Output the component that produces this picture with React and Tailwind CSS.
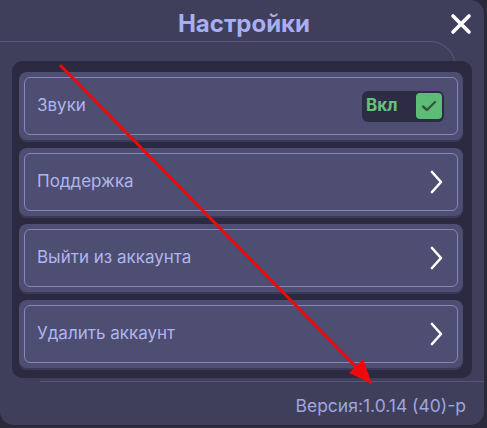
import React from "react";

function Chevron() {
  return (
    <svg width="14" height="24" viewBox="0 0 14 24" fill="none">
      <path d="M3 2 L12 12 L3 22" stroke="#ffffff" strokeWidth="2.6" strokeLinecap="round" strokeLinejoin="round" />
    </svg>
  );
}

function Row({ label, right }) {
  return (
    <div className="h-[68px] rounded-[8px] bg-[#4e4d72] p-[5px] shadow-[0_2px_0_#3a3957]">
      <div className="h-full rounded-[6px] border border-[#8584bb] flex items-center justify-between pl-[12px] pr-[14px]">
        <span className="text-[17px] text-[#b0b5ec]">{label}</span>
        {right}
      </div>
    </div>
  );
}

function Toggle() {
  return (
    <div className="-mr-[1px] w-[82px] h-[31px] rounded-[6px] bg-[#2d2c44] flex items-center justify-between pl-[4px] pr-[2px]">
      <span className="text-[17px] font-bold text-[#67c27b]">Вкл</span>
      <div className="w-[26px] h-[26px] rounded-[4px] bg-[#5dbd76] flex items-center justify-center">
        <svg width="16" height="12" viewBox="0 0 16 12" fill="none">
          <path d="M2 6.5 L6 10 L14 2" stroke="#35573f" strokeWidth="2.4" strokeLinecap="round" strokeLinejoin="round" />
        </svg>
      </div>
    </div>
  );
}

export default function App() {
  return (
    <div className="w-[487px] h-[428px] bg-[#2a2a3b]" style={{ fontFamily: "Inter, 'Noto Sans', sans-serif" }}>
      <div className="relative w-[484px] h-[425px] bg-[#403f5b] rounded-[14px] rounded-tl-none overflow-hidden flex flex-col">
        <div className="h-[41px] flex items-center justify-center relative shrink-0">
          <span className="text-[24px] font-bold text-[#a8aef2] leading-none mt-[7px] ml-[4px]">Настройки</span>
          <div className="absolute right-[12px] top-[13px]">
            <svg width="22" height="22" viewBox="0 0 22 22" fill="none">
              <path d="M3 3 L19 19 M19 3 L3 19" stroke="#ffffff" strokeWidth="3.6" strokeLinecap="round" />
            </svg>
          </div>
        </div>
        <div className="border-t border-r border-[#57567d] rounded-tr-[26px] mr-[28px] pt-[19px] h-[38px] shrink-0" />
        <div className="-mt-[18px] ml-[12px] mr-[12px] h-[317px] rounded-[10px] bg-[#2b2a41] pl-[7px] pr-[9px] pt-[11px] flex flex-col gap-[8px] relative">
          <Row label="Звуки" right={<Toggle />} />
          <Row label="Поддержка" right={<Chevron />} />
          <Row label="Выйти из аккаунта" right={<Chevron />} />
          <Row label="Удалить аккаунт" right={<Chevron />} />
        </div>
        <div className="mt-[3px] ml-[40px] border-t border-[#56557b]" />
        <div className="flex justify-end pr-[18px] pt-[11px]">
          <span className="text-[17.5px] text-[#9fa6dd]">Версия:1.0.14 (40)-p</span>
        </div>
        <svg className="absolute left-0 top-0 pointer-events-none" width="484" height="425" viewBox="0 0 484 425">
          <line x1="60" y1="65" x2="364" y2="375" stroke="#ee0a0a" strokeWidth="3" />
          <polygon points="372,384 349,373 363,359" fill="#ee0a0a" />
        </svg>
      </div>
    </div>
  );
}
